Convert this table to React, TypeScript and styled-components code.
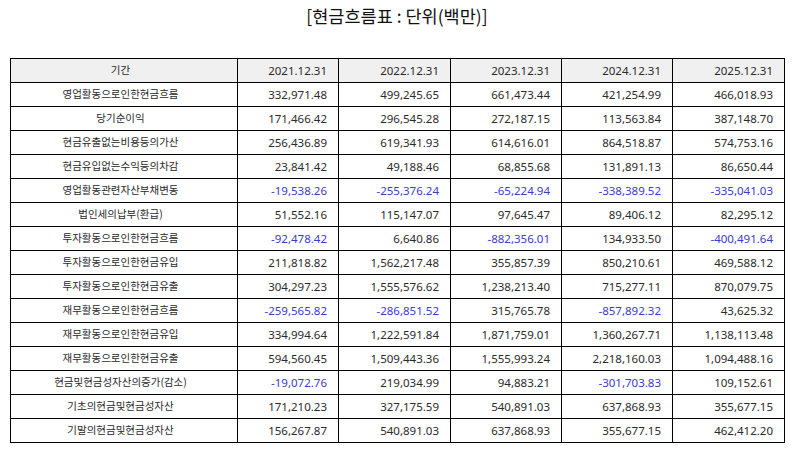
import React from "react";
import styled, { createGlobalStyle } from "styled-components";

const Global = createGlobalStyle`
  html, body { margin: 0; padding: 0; background: #fff; }
  body { font-family: "Noto Sans CJK KR", "Noto Sans", sans-serif; color: #111; }
`;

const Page = styled.div`
  width: 794px;
  display: flex;
  flex-direction: column;
  align-items: stretch;
`;

const Title = styled.h1`
  margin: 0 0 26px;
  height: 32px;
  line-height: 32px;
  font-size: 17.5px;
  font-weight: 400;
  text-align: center;
  color: #111;
`;

const Table = styled.table`
  margin: 0 10px;
  width: 774px;
  border-collapse: collapse;
  table-layout: fixed;
  border: 1px solid #000;
`;

const Cell = styled.td<{ $head?: boolean; $label?: boolean; $neg?: boolean }>`
  height: 23px;
  padding: 0 11px 0 4px;
  border: 1px solid #000;
  line-height: 1;
  font-weight: 400;
  font-family: ${(p) =>
    p.$label ? `"Noto Sans CJK KR", sans-serif` : `"Noto Sans", "Noto Sans CJK KR", sans-serif`};
  font-size: ${(p) => (p.$label ? "10.5px" : "11.5px")};
  text-align: ${(p) => (p.$label ? "center" : "right")};
  background: ${(p) => (p.$head ? "#f0f0f0" : "#fff")};
  color: ${(p) => (p.$neg ? "#3a3ad0" : "#2a2a2a")};
  white-space: nowrap;
`;

const widths = [227, 101, 112, 111, 111, 112];
const years = ["2021.12.31", "2022.12.31", "2023.12.31", "2024.12.31", "2025.12.31"];

const rows: [string, string[]][] = [
  ["영업활동으로인한현금흐름", ["332,971.48", "499,245.65", "661,473.44", "421,254.99", "466,018.93"]],
  ["당기순이익", ["171,466.42", "296,545.28", "272,187.15", "113,563.84", "387,148.70"]],
  ["현금유출없는비용등의가산", ["256,436.89", "619,341.93", "614,616.01", "864,518.87", "574,753.16"]],
  ["현금유입없는수익등의차감", ["23,841.42", "49,188.46", "68,855.68", "131,891.13", "86,650.44"]],
  ["영업활동관련자산부채변동", ["-19,538.26", "-255,376.24", "-65,224.94", "-338,389.52", "-335,041.03"]],
  ["법인세의납부(환급)", ["51,552.16", "115,147.07", "97,645.47", "89,406.12", "82,295.12"]],
  ["투자활동으로인한현금흐름", ["-92,478.42", "6,640.86", "-882,356.01", "134,933.50", "-400,491.64"]],
  ["투자활동으로인한현금유입", ["211,818.82", "1,562,217.48", "355,857.39", "850,210.61", "469,588.12"]],
  ["투자활동으로인한현금유출", ["304,297.23", "1,555,576.62", "1,238,213.40", "715,277.11", "870,079.75"]],
  ["재무활동으로인한현금흐름", ["-259,565.82", "-286,851.52", "315,765.78", "-857,892.32", "43,625.32"]],
  ["재무활동으로인한현금유입", ["334,994.64", "1,222,591.84", "1,871,759.01", "1,360,267.71", "1,138,113.48"]],
  ["재무활동으로인한현금유출", ["594,560.45", "1,509,443.36", "1,555,993.24", "2,218,160.03", "1,094,488.16"]],
  ["현금및현금성자산의증가(감소)", ["-19,072.76", "219,034.99", "94,883.21", "-301,703.83", "109,152.61"]],
  ["기초의현금및현금성자산", ["171,210.23", "327,175.59", "540,891.03", "637,868.93", "355,677.15"]],
  ["기말의현금및현금성자산", ["156,267.87", "540,891.03", "637,868.93", "355,677.15", "462,412.20"]],
];

export default function App() {
  return (
    <Page>
      <Global />
      <Title>[현금흐름표 : 단위(백만)]</Title>
      <Table>
        <colgroup>
          {widths.map((w, i) => (
            <col key={i} style={{ width: w }} />
          ))}
        </colgroup>
        <thead>
          <tr>
            <Cell as="th" $head $label>기간</Cell>
            {years.map((y) => (
              <Cell as="th" $head key={y}>{y}</Cell>
            ))}
          </tr>
        </thead>
        <tbody>
          {rows.map(([label, vals]) => (
            <tr key={label}>
              <Cell $label>{label}</Cell>
              {vals.map((v, i) => (
                <Cell key={i} $neg={v.startsWith("-")}>{v}</Cell>
              ))}
            </tr>
          ))}
        </tbody>
      </Table>
    </Page>
  );
}
